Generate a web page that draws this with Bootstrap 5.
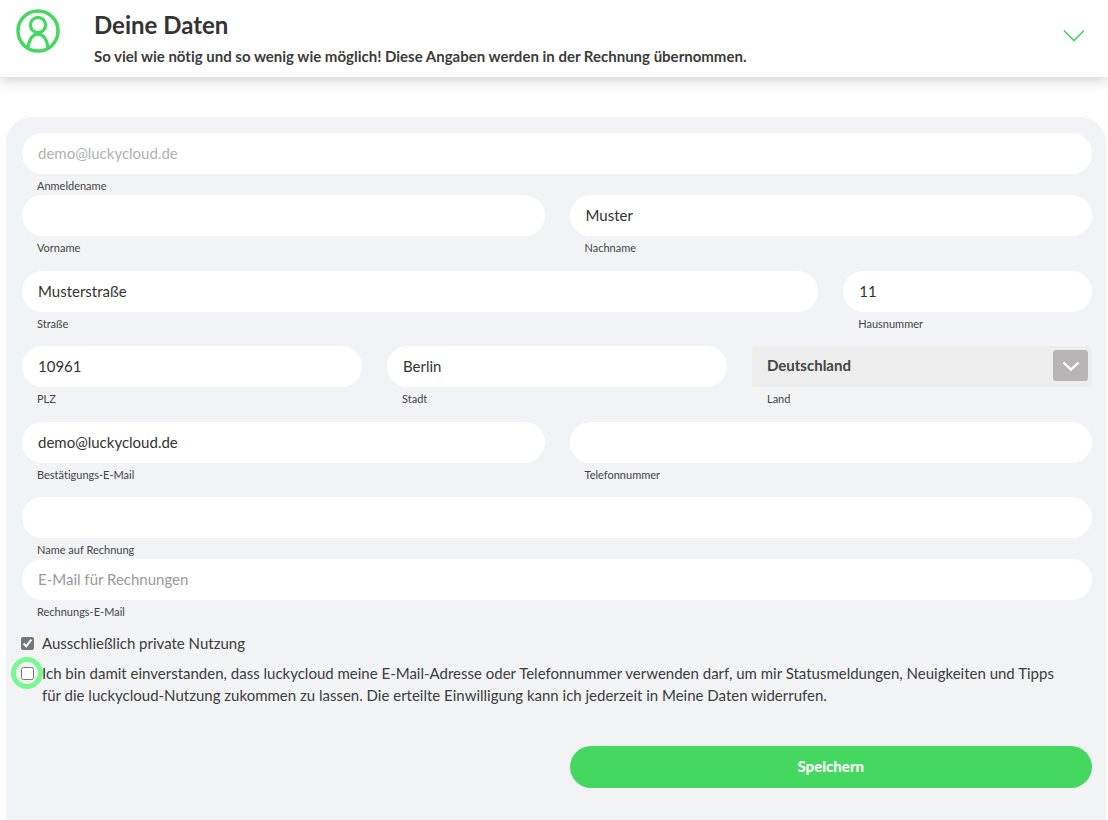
<!DOCTYPE html>
<html lang="de">
<head>
<meta charset="utf-8">
<meta name="viewport" content="width=device-width, initial-scale=1">
<title>Deine Daten</title>
<link href="https://cdn.jsdelivr.net/npm/bootstrap@5.3.0/dist/css/bootstrap.min.css" rel="stylesheet">
<style>
  body { font-family: Lato, "Liberation Sans", sans-serif; font-size: 15px; line-height: 22px; font-variant-ligatures: none; color: #3c3c3b; background: #fff; }
  .page-head { padding: 8px 22px 7px 16px; box-shadow: 0 2px 14px rgba(0, 0, 0, .22); }
  .head-text { margin-left: 34px; }
  .head-text h1 { font-size: 24px; line-height: 34px; font-weight: 700; color: #333; }
  .head-text p { font-size: 15px; line-height: 28px; font-weight: 700; }
  .toggle-btn { line-height: 0; }
  .panel { margin: 40px 2px 0 6px; padding: 16px 14px 32px 16px; background: #f1f3f5; border-radius: 26px 26px 0 0; min-height: calc(100vh - 117px); }
  .fields { --bs-gutter-x: 25px; }
  .space-a { margin-bottom: 14px; }
  .space-b { margin-bottom: 13px; }
  .fields .form-control, .fields .form-select { height: 41px; font-size: 15px; line-height: 22px; padding: 0 16px 1px; border: 0; color: #333; }
  .fields .form-control { border-radius: 21px; background: #fff; }
  .fields .form-control::placeholder { color: #999; }
  .fields .form-control:disabled { color: #b1b1b1; opacity: 1; }
  .fields .form-select { padding: 0 50px 3px 15px; border-radius: 3px; background: #ededed; font-weight: 700; color: #444; }
  .select-arrow { top: 4px; right: 4px; width: 35px; height: 31px; border-radius: 3px; background: #b7b5b6; pointer-events: none; }
  .field-label { display: block; padding: 4px 15px 1px; font-size: 11px; line-height: 16px; color: #444; }
  .checks { padding-top: 11px; }
  .check-row { gap: 8px; margin-left: -1px; }
  .check-row input { width: 13px; height: 13px; margin: 5px 0 0; accent-color: #767676; display: block; }
  .focus-mark { top: -5px; left: -10px; width: 32px; height: 32px; border: 5px solid #79f891; border-radius: 50%; pointer-events: none; }
  .btn-save { height: 42px; padding: 0 16px 2px; border-radius: 21px; background: #45d860; color: #fff; font-size: 15px; font-weight: 900; line-height: 22px; border: 0; }
  .btn-save:hover { background: #39c453; color: #fff; }
</style>
</head>
<body>
<header class="page-head d-flex align-items-start">
  <svg class="flex-shrink-0" width="44" height="46" viewBox="0 0 44 46" fill="none" stroke="#45d860" stroke-width="3.2" aria-hidden="true">
    <circle cx="22" cy="23" r="20" stroke-width="3.5"/>
    <circle cx="22" cy="17" r="7.6"/>
    <path d="M11.800 40C13 33 16 26.200 22 26.200S31 33 32.200 40"/>
  </svg>
  <div class="head-text flex-grow-1">
    <h1 class="m-0">Deine Daten</h1>
    <p class="m-0">So viel wie nötig und so wenig wie möglich! Diese Angaben werden in der Rechnung übernommen.</p>
  </div>
  <button type="button" class="toggle-btn btn border-0 p-0 mt-3" aria-label="Bereich einklappen">
    <svg width="24" height="24" viewBox="0 0 24 24" fill="none" stroke="#45d860" stroke-width="1.7"><path d="M2 6.500L12 16.500L22 6.500"/></svg>
  </button>
</header>

<main class="panel">
  <form>
    <div class="row fields">
      <div class="col-12">
        <input class="form-control" id="login" type="text" value="demo@luckycloud.de" disabled>
        <label class="field-label" for="login">Anmeldename</label>
      </div>
    </div>
    <div class="row fields space-a">
      <div class="col-6">
        <input class="form-control" id="first" type="text">
        <label class="field-label" for="first">Vorname</label>
      </div>
      <div class="col-6">
        <input class="form-control" id="last" type="text" value="Muster">
        <label class="field-label" for="last">Nachname</label>
      </div>
    </div>
    <div class="row fields space-b">
      <div class="col-9">
        <input class="form-control" id="street" type="text" value="Musterstraße">
        <label class="field-label" for="street">Straße</label>
      </div>
      <div class="col-3">
        <input class="form-control" id="number" type="text" value="11">
        <label class="field-label" for="number">Hausnummer</label>
      </div>
    </div>
    <div class="row fields space-a">
      <div class="col-4">
        <input class="form-control" id="zip" type="text" value="10961">
        <label class="field-label" for="zip">PLZ</label>
      </div>
      <div class="col-4">
        <input class="form-control" id="city" type="text" value="Berlin">
        <label class="field-label" for="city">Stadt</label>
      </div>
      <div class="col-4">
        <div class="position-relative">
          <select class="form-select" id="country"><option>Deutschland</option><option>Österreich</option><option>Schweiz</option></select>
          <span class="select-arrow position-absolute d-flex align-items-center justify-content-center">
            <svg width="18" height="12" viewBox="0 0 18 12" fill="none" stroke="#fff" stroke-width="2.4" aria-hidden="true"><path d="M1.500 2.500L9 9.700L16.500 2.500"/></svg>
          </span>
        </div>
        <label class="field-label" for="country">Land</label>
      </div>
    </div>
    <div class="row fields space-b">
      <div class="col-6">
        <input class="form-control" id="mail" type="email" value="demo@luckycloud.de">
        <label class="field-label" for="mail">Bestätigungs-E-Mail</label>
      </div>
      <div class="col-6">
        <input class="form-control" id="phone" type="tel">
        <label class="field-label" for="phone">Telefonnummer</label>
      </div>
    </div>
    <div class="row fields">
      <div class="col-12">
        <input class="form-control" id="billname" type="text">
        <label class="field-label" for="billname">Name auf Rechnung</label>
      </div>
      <div class="col-12">
        <input class="form-control" id="billmail" type="email" placeholder="E-Mail für Rechnungen">
        <label class="field-label" for="billmail">Rechnungs-E-Mail</label>
      </div>
    </div>
    <div class="checks">
      <div class="check-row d-flex align-items-start">
        <input class="flex-shrink-0" id="private" type="checkbox" checked>
        <label for="private">Ausschließlich private Nutzung</label>
      </div>
      <div class="check-row d-flex align-items-start mt-2">
        <span class="position-relative flex-shrink-0">
          <input id="consent" type="checkbox">
          <span class="focus-mark position-absolute"></span>
        </span>
        <label class="pe-4" for="consent">Ich bin damit einverstanden, dass luckycloud meine E-Mail-Adresse oder Telefonnummer verwenden darf, um mir Statusmeldungen, Neuigkeiten und Tipps für die luckycloud-Nutzung zukommen zu lassen. Die erteilte Einwilligung kann ich jederzeit in Meine Daten widerrufen.</label>
      </div>
    </div>
    <div class="row fields justify-content-end mt-4 pt-3">
      <div class="col-6"><button type="submit" class="btn btn-save w-100">Speichern</button></div>
    </div>
  </form>
</main>
<script src="https://cdn.jsdelivr.net/npm/bootstrap@5.3.0/dist/js/bootstrap.bundle.min.js"></script>
</body>
</html>
